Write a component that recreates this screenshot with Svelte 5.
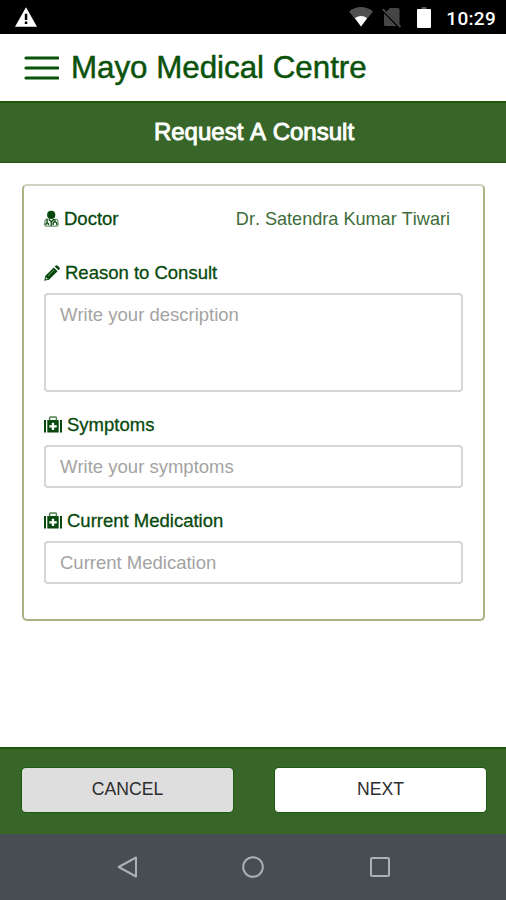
<script>
  const fields = [
    { label: 'Reason to Consult', icon: 'pencil', hint: 'Write your description', multiline: true },
    { label: 'Symptoms', icon: 'medkit', hint: 'Write your symptoms' },
    { label: 'Current Medication', icon: 'medkit', hint: 'Current Medication' }
  ];
</script>

<div class="screen">
  <div class="status">
    <svg class="warn" width="22" height="20" viewBox="0 0 22 20">
      <path d="M11 0.3 22 19.7H0Z" fill="#fff" />
      <path d="M9.8 6.8h2.5v6.3H9.8zM9.8 14.6h2.5v2.4H9.8z" fill="#000" />
    </svg>
    <div class="signals">
      <svg width="24" height="20" viewBox="0 0 24 20">
        <path d="M0 4.6C7 -1.5 17 -1.5 24 4.6L12 19.5Z" fill="#505050" />
        <path d="M6 11.2C9.5 8.4 14.5 8.4 18 11.2L12 19.5Z" fill="#fff" />
      </svg>
      <svg width="20" height="21" viewBox="0 0 20 21">
        <path d="M8 1h8q1.5 0 1.5 1.5V19H3.5q-1.5 0-1.5-1.5V7Z" fill="#464646" />
        <path d="M-.5 1.7 18.5 21" stroke="#000" stroke-width="3" />
        <path d="M.7 2.2 18.6 20" stroke="#484848" stroke-width="1.8" />
      </svg>
      <svg width="14" height="22" viewBox="0 0 14 22">
        <path d="M4.5 0h5v3h-5z" fill="#555" />
        <rect y="2" width="14" height="19" rx="1" fill="#fff" />
      </svg>
      <span class="time">10:29</span>
    </div>
  </div>

  <header>
    <svg width="35" height="24" viewBox="0 0 35 24">
      <path d="M2 2H34M2 12H34M2 22H34" stroke="#0a530a" stroke-width="3.2" stroke-linecap="round" />
    </svg>
    <h1>Mayo Medical Centre</h1>
  </header>
  <h2>Request A Consult</h2>

  <main>
    <section class="card">
      <div class="doctor">
        <span class="label">
          <svg width="15" height="17" viewBox="0 0 15 17">
            <circle cx="7.2" cy="4.9" r="4.1" fill="#07490c" />
            <path d="M3 9.1C.8 9.3.6 11 .6 14.4q0 1.8 2 1.8h9.6q2 0 2-1.8c0-3.4-.2-5.1-2.4-5.3" fill="none" stroke="#6d946d" stroke-width="1.2" />
            <path d="M3.1 8.8v4M2 15v-1.3q1.2-1.8 2.4 0V15M4.7 9.3l2.5 2.5 3-2.7M7.2 11.5v4.4M11 9v2.4M9.1 15v-2q2-2.5 3.6 0v2" fill="none" stroke="#07490c" stroke-width="1.3" />
          </svg>
          Doctor
        </span>
        <span class="name">Dr. Satendra Kumar Tiwari</span>
      </div>

      {#each fields as field}
        <label class="field">
          <span class="label">
            {#if field.icon === 'pencil'}
              <svg width="16" height="16" viewBox="0 0 16 16">
                <path d="M.3 15.7 1.2 11 9.8 2.4l3.8 3.8L5 14.8ZM10.7 1.5 11.5.7q1.1-1 2.2 0l1.6 1.6q1 1.1 0 2.2l-.8.8Z" fill="#07490c" />
                <path d="m1.9 12.2 1.9 1.9-1.2.3-1-1Z" fill="#fff" />
                <path d="m4 11 6-6" stroke="#9db79d" stroke-width=".7" />
              </svg>
            {:else}
              <svg width="18" height="17" viewBox="0 0 18 17">
                <path d="M0 4h2v12.5H0zM16 4h2v12.5h-2zM3.3 4h11.4v12.5H3.3z" fill="#07490c" />
                <path d="M5.6 4.5V2q0-.9.9-.9h5q.9 0 .9.9v2.5" fill="none" stroke="#4f7d4f" stroke-width="1.5" />
                <path d="M7.8 6.8h2.4v2.4h2.5v2.4h-2.5v2.4H7.8v-2.4H5.3V9.2h2.5z" fill="#fff" />
              </svg>
            {/if}
            {field.label}
          </span>
          {#if field.multiline}
            <textarea placeholder={field.hint}></textarea>
          {:else}
            <input type="text" placeholder={field.hint} />
          {/if}
        </label>
      {/each}
    </section>
  </main>

  <footer>
    <button class="cancel">CANCEL</button>
    <button>NEXT</button>
  </footer>

  <nav>
    <svg width="24" height="24" viewBox="0 0 24 24"><path d="M21 2.5v19L3.7 12Z" /></svg>
    <svg width="24" height="24" viewBox="0 0 24 24"><circle cx="12" cy="12" r="9.8" /></svg>
    <svg width="24" height="24" viewBox="0 0 24 24"><rect x="3" y="3" width="18" height="18" rx="1" /></svg>
  </nav>
</div>

<style>
  :global(body) { margin: 0; }
  .screen {
    display: flex;
    flex-direction: column;
    width: 506px;
    height: 900px;
    overflow: hidden;
    background: #fff;
    font-family: 'Liberation Sans', Arial, sans-serif;
    font-kerning: none;
  }
  .screen * { box-sizing: border-box; }
  svg { flex: none; display: block; }
  .status {
    height: 34px;
    flex: none;
    background: #000;
    display: flex;
    justify-content: space-between;
    align-items: flex-start;
    padding: 7px 10px 0 15px;
  }
  .signals { display: flex; align-items: flex-start; }
  .signals svg:nth-child(2) { margin-left: 9px; }
  .signals svg:nth-child(3) { margin-left: 15px; }
  .time {
    font: 500 19px/23px Roboto, sans-serif;
    letter-spacing: 0.3px;
    color: #fff;
    margin-left: 15px;
  }
  header {
    height: 67px;
    flex: none;
    display: flex;
    align-items: center;
    gap: 12px;
    padding-left: 24px;
  }
  h1 {
    margin: 0;
    font-size: 31.3px;
    font-weight: 400;
    line-height: 36px;
    color: #0b520b;
    -webkit-text-stroke: 0.5px #0b520b;
    white-space: nowrap;
  }
  h2 {
    margin: 0;
    height: 62px;
    flex: none;
    background: #386629;
    border-top: 2px solid #1f560c;
    border-bottom: 1px solid #1f560c;
    color: #fff;
    font-size: 24px;
    font-weight: 400;
    line-height: 57px;
    text-align: center;
    padding-left: 2px;
    -webkit-text-stroke: 0.9px #fff;
  }
  main { flex: 1; padding: 21px 21px 0 22px; }
  .card {
    height: 437px;
    border: 2px solid #a9b583;
    border-top-color: #cfd2c0;
    border-radius: 5px;
    padding: 22px 20px 0;
  }
  .doctor {
    display: flex;
    justify-content: space-between;
    padding-right: 13px;
    margin-bottom: 33px;
    height: 21px;
  }
  .label {
    display: flex;
    align-items: center;
    gap: 5px;
    height: 21px;
    font-size: 18.5px;
    line-height: 21px;
    color: #07490c;
    -webkit-text-stroke: 0.3px #07490c;
  }
  .name { font-size: 18.1px; line-height: 23px; color: #3d6d38; }
  .field { display: block; margin-bottom: 23px; }
  textarea, input {
    display: block;
    width: 419px;
    margin: 10px 0 0;
    padding: 0 14px;
    border: 2px solid #d6d6d6;
    border-radius: 4px;
    background: #fff;
    font: 18.5px/21px 'Liberation Sans', Arial, sans-serif;
    font-kerning: none;
    resize: none;
    outline: none;
  }
  textarea { height: 99px; margin-bottom: -1px; padding-top: 9px; }
  input { height: 43px; margin-bottom: -1px; padding-top: 1px; }
  ::placeholder { color: #a3a3a3; opacity: 1; }
  footer {
    height: 87px;
    flex: none;
    background: #386629;
    border-top: 2px solid #1f560c;
    display: flex;
    gap: 42px;
    padding: 19px 20px 0 22px;
  }
  button {
    width: 211px;
    height: 44px;
    padding: 0 0 2px;
    border: 0;
    border-radius: 4px;
    box-shadow: 0 0 0 1px #1f5a12;
    background: #fff;
    color: #2d2d2d;
    font: 17.6px/42px 'Liberation Sans', Arial, sans-serif;
  }
  .cancel { background: #dedede; }
  nav {
    height: 66px;
    flex: none;
    background: #464d53;
    display: flex;
    justify-content: center;
    align-items: center;
    gap: 102.5px;
  }
  nav svg { fill: none; stroke: #abb0b2; stroke-width: 2; stroke-linejoin: round; }
</style>
